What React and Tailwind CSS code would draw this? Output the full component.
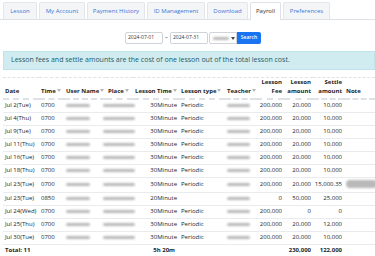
import React from 'react';

const tabs = [
  { label: 'Lesson', w: 'w-[34px]' },
  { label: 'My Account', w: 'w-[46px]' },
  { label: 'Payment History', w: 'w-[58px]' },
  { label: 'ID Management', w: 'w-[58px]' },
  { label: 'Download', w: 'w-[41px]' },
  { label: 'Payroll', w: 'w-[31px]', active: true },
  { label: 'Preferences', w: 'w-[47px]' },
];

const rows = [
  { date: 'Jul 2(Tue)', time: '0700', len: '30Minute', type: 'Periodic', fee: '200,000', amt: '20,000', settle: '10,000' },
  { date: 'Jul 4(Thu)', time: '0700', len: '30Minute', type: 'Periodic', fee: '200,000', amt: '20,000', settle: '10,000' },
  { date: 'Jul 9(Tue)', time: '0700', len: '30Minute', type: 'Periodic', fee: '200,000', amt: '20,000', settle: '10,000' },
  { date: 'Jul 11(Thu)', time: '0700', len: '30Minute', type: 'Periodic', fee: '200,000', amt: '20,000', settle: '10,000' },
  { date: 'Jul 16(Tue)', time: '0700', len: '30Minute', type: 'Periodic', fee: '200,000', amt: '20,000', settle: '10,000' },
  { date: 'Jul 18(Thu)', time: '0700', len: '30Minute', type: 'Periodic', fee: '200,000', amt: '20,000', settle: '10,000' },
  { date: 'Jul 23(Tue)', time: '0700', len: '30Minute', type: 'Periodic', fee: '200,000', amt: '20,000', settle: '15,000.35', note: true },
  { date: 'Jul 23(Tue)', time: '0850', len: '20Minute', type: '', fee: '0', amt: '50,000', settle: '25,000' },
  { date: 'Jul 24(Wed)', time: '0700', len: '30Minute', type: 'Periodic', fee: '200,000', amt: '0', settle: '0' },
  { date: 'Jul 25(Thu)', time: '0700', len: '30Minute', type: 'Periodic', fee: '200,000', amt: '20,000', settle: '12,000' },
  { date: 'Jul 30(Tue)', time: '0700', len: '30Minute', type: 'Periodic', fee: '200,000', amt: '20,000', settle: '10,000' },
];

const Sort = () => (
  <svg width="4" height="3" viewBox="0 0 4 3" className="inline-block ml-[1px] align-middle">
    <polygon points="0,0 4,0 2,3" fill="#b5b5b5" />
  </svg>
);

const Smudge = ({ className }) => (
  <span className={`inline-block align-middle rounded-full bg-[#b9b9b9] blur-[1.2px] ${className}`} />
);

const App = () => {
  return (
    <div className="w-[375px] h-[256px] overflow-hidden bg-white text-[#212529] font-['Open_Sans',sans-serif]">
      {/* Tabs */}
      <div className="flex items-end gap-[2px] pl-[3px] pt-[2px] border-b border-[#dee2e6]">
        {tabs.map((t) => (
          <div
            key={t.label}
            className={`${t.w} h-[17px] flex items-center justify-center border border-b-0 rounded-t-[2px] text-[6px] whitespace-nowrap ${
              t.active
                ? 'bg-white border-[#dee2e6] text-[#333] -mb-px h-[18px]'
                : 'bg-[#f4f5f7] border-[#e3e6ea] text-[#3a78d8]'
            }`}
          >
            {t.label}
          </div>
        ))}
      </div>

      {/* Date filter */}
      <div className="flex items-center mt-[12px] pl-[125px] h-[12px] text-[5px]">
        <div className="w-[38px] h-[12px] flex items-center border border-[#ced4da] rounded-[2px] px-[2px] text-[#333]">2024-07-01</div>
        <span className="w-[7px] text-center text-[#555]">~</span>
        <div className="w-[38px] h-[12px] flex items-center border border-[#ced4da] rounded-[2px] px-[2px] text-[#333]">2024-07-31</div>
        <div className="ml-[1px] w-[28px] h-[12px] flex items-center justify-between border border-[#ced4da] rounded-l-[2px] pl-[3px] pr-[1px]">
          <Smudge className="w-[16px] h-[3px]" />
          <svg width="4" height="3" viewBox="0 0 4 3"><polygon points="0,0 4,0 2,3" fill="#444" /></svg>
        </div>
        <div className="w-[24px] h-[12px] flex items-center justify-center bg-[#1a73f0] text-white font-semibold rounded-r-[2px]">Search</div>
      </div>

      {/* Info alert */}
      <div className="mt-[7px] ml-[3px] h-[19px] flex items-center px-[7px] bg-[#d1ecf1] border border-[#bee5eb] text-[#1c5a66] text-[7px] whitespace-nowrap">
        Lesson fees and settle amounts are the cost of one lesson out of the total lesson cost.
      </div>

      {/* Table */}
      <table className="mt-[7px] ml-[3px] table-fixed border-collapse text-[6px] w-[372px]">
        <colgroup>
          <col className="w-[36px]" />
          <col className="w-[25px]" />
          <col className="w-[42px]" />
          <col className="w-[27px]" />
          <col className="w-[46px]" />
          <col className="w-[46px]" />
          <col className="w-[31px]" />
          <col className="w-[28px]" />
          <col className="w-[29px]" />
          <col className="w-[31px]" />
          <col className="w-[31px]" />
        </colgroup>
        <thead>
          <tr className="border-t border-dashed border-[#e2e2e2] border-b-2 border-b-[#dee2e6] font-bold leading-[8.5px] align-bottom">
            <th className="text-left pl-[2px] pb-[3px] h-[21px]">Date</th>
            <th className="text-left pl-[2px] pb-[3px] whitespace-nowrap">Time<Sort /></th>
            <th className="text-left pl-[2px] pb-[3px] whitespace-nowrap">User Name<Sort /></th>
            <th className="text-left pl-[2px] pb-[3px] whitespace-nowrap">Place<Sort /></th>
            <th className="text-left pl-[2px] pb-[3px] whitespace-nowrap">Lesson Time<Sort /></th>
            <th className="text-left pl-[2px] pb-[3px] whitespace-nowrap">Lesson type<Sort /></th>
            <th className="text-left pl-[2px] pb-[3px] whitespace-nowrap">Teacher<Sort /></th>
            <th className="text-right pr-[2px] pb-[3px]">Lesson<br />Fee</th>
            <th className="text-right pr-[2px] pb-[3px]">Lesson<br />amount</th>
            <th className="text-right pr-[2px] pb-[3px]">Settle<br />amount</th>
            <th className="text-left pl-[2px] pb-[3px]">Note</th>
          </tr>
        </thead>
        <tbody>
          {rows.map((r, i) => (
            <tr key={i} className="border-b border-[#e9ecef]">
              <td className={`pl-[2px] whitespace-nowrap ${r.note ? 'h-[15px]' : 'h-[13px]'}`}>{r.date}</td>
              <td className="pl-[2px]">{r.time}</td>
              <td className="pl-[2px]"><Smudge className="w-[24px] h-[3.5px]" /></td>
              <td className="pl-0"><Smudge className="-ml-[3px] w-[32px] h-[3.5px]" /></td>
              <td className="text-right pr-[2px]">{r.len}</td>
              <td className="pl-[2px]">{r.type}</td>
              <td className="pl-[2px]"><Smudge className="w-[23px] h-[3.5px]" /></td>
              <td className="text-right pr-[2px]">{r.fee}</td>
              <td className="text-right pr-[2px]">{r.amt}</td>
              <td className="text-right pr-[2px] whitespace-nowrap">{r.settle}</td>
              <td className="pl-[2px]">{r.note && <Smudge className="w-[31px] h-[8px] rounded-[2px]" />}</td>
            </tr>
          ))}
          <tr className="border-b-2 border-[#d6d6d6] font-bold">
            <td colSpan={4} className="pl-[2px] h-[13px]">Total: 11</td>
            <td className="text-right pr-[4px]">5h 20m</td>
            <td />
            <td />
            <td />
            <td className="text-right pr-[2px]">230,000</td>
            <td className="text-right pr-[2px]">122,000</td>
            <td />
          </tr>
        </tbody>
      </table>
    </div>
  );
};

export default App;
